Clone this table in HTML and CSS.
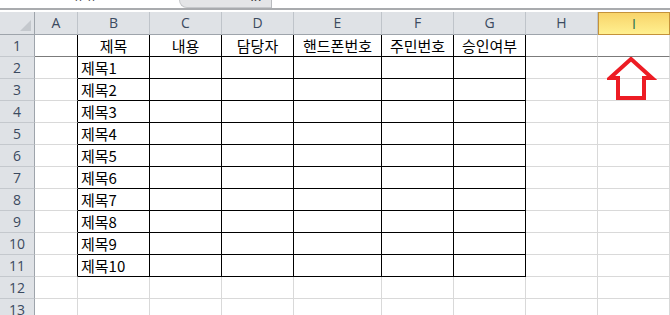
FILE: index.html
```html
<!DOCTYPE html>
<html lang="ko">
<head>
  <meta charset="UTF-8" />
  <meta name="viewport" content="width=device-width, initial-scale=1" />
  <title>승인 명단</title>
  <link rel="stylesheet" href="styles.css">
</head>
<body>
  <!-- formula bar, only its lower edge is in view -->
  <div class="fbar">
    <div class="namebox"><span class="cut">ㅠㅠ</span></div>
    <div class="fxbox"><span class="fx">fx</span></div>
    <div class="finput"></div>
  </div>

  <div class="sheet">
    <div class="corner"></div>
    <div class="hd">A</div><div class="hd">B</div><div class="hd">C</div><div class="hd">D</div><div class="hd">E</div>
    <div class="hd">F</div><div class="hd">G</div><div class="hd">H</div><div class="hd sel">I</div>

    <div class="rn">1</div><div class="c e fr"></div>
    <div class="c t mid">제목</div><div class="c t mid">내용</div><div class="c t mid">담당자</div><div class="c t mid">핸드폰번호</div><div class="c t mid">주민번호</div><div class="c t mid">승인여부</div>
    <div class="c fr"></div><div class="c fr"></div>

    <div class="rn">2</div><div class="c e"></div><div class="c t">제목1</div><div class="c t"></div><div class="c t"></div><div class="c t"></div><div class="c t"></div><div class="c t"></div><div class="c"></div><div class="c"></div>
    <div class="rn">3</div><div class="c e"></div><div class="c t">제목2</div><div class="c t"></div><div class="c t"></div><div class="c t"></div><div class="c t"></div><div class="c t"></div><div class="c"></div><div class="c"></div>
    <div class="rn">4</div><div class="c e"></div><div class="c t">제목3</div><div class="c t"></div><div class="c t"></div><div class="c t"></div><div class="c t"></div><div class="c t"></div><div class="c"></div><div class="c"></div>
    <div class="rn">5</div><div class="c e"></div><div class="c t">제목4</div><div class="c t"></div><div class="c t"></div><div class="c t"></div><div class="c t"></div><div class="c t"></div><div class="c"></div><div class="c"></div>
    <div class="rn">6</div><div class="c e"></div><div class="c t">제목5</div><div class="c t"></div><div class="c t"></div><div class="c t"></div><div class="c t"></div><div class="c t"></div><div class="c"></div><div class="c"></div>
    <div class="rn">7</div><div class="c e"></div><div class="c t">제목6</div><div class="c t"></div><div class="c t"></div><div class="c t"></div><div class="c t"></div><div class="c t"></div><div class="c"></div><div class="c"></div>
    <div class="rn">8</div><div class="c e"></div><div class="c t">제목7</div><div class="c t"></div><div class="c t"></div><div class="c t"></div><div class="c t"></div><div class="c t"></div><div class="c"></div><div class="c"></div>
    <div class="rn">9</div><div class="c e"></div><div class="c t">제목8</div><div class="c t"></div><div class="c t"></div><div class="c t"></div><div class="c t"></div><div class="c t"></div><div class="c"></div><div class="c"></div>
    <div class="rn">10</div><div class="c e"></div><div class="c t">제목9</div><div class="c t"></div><div class="c t"></div><div class="c t"></div><div class="c t"></div><div class="c t"></div><div class="c"></div><div class="c"></div>
    <div class="rn">11</div><div class="c e"></div><div class="c t">제목10</div><div class="c t"></div><div class="c t"></div><div class="c t"></div><div class="c t"></div><div class="c t"></div><div class="c"></div><div class="c"></div>
    <div class="rn">12</div><div class="c"></div><div class="c"></div><div class="c"></div><div class="c"></div><div class="c"></div><div class="c"></div><div class="c"></div><div class="c"></div><div class="c"></div>
    <div class="rn">13</div><div class="c"></div><div class="c"></div><div class="c"></div><div class="c"></div><div class="c"></div><div class="c"></div><div class="c"></div><div class="c"></div><div class="c"></div>

    <!-- red arrow drawn over column I -->
    <svg class="arrow" width="50" height="46" viewBox="0 0 50 46">
      <polygon points="24,2 45,21 37,21 37,41 11,41 11,21 3,21" fill="none" stroke="#ed1c24" stroke-width="4" stroke-linejoin="miter" />
    </svg>
  </div>
</body>
</html>
```

FILE: styles.css
```css
body { margin: 0; width: 670px; height: 315px; overflow: hidden; background: #fff; font-family: "Noto Sans CJK KR", "Noto Sans", sans-serif; }

.fbar { display: flex; height: 8px; border-bottom: 2px solid #a9abae; margin-bottom: 2px; overflow: hidden; }
.namebox { width: 179px; position: relative; }
.cut { position: absolute; left: 72px; top: -12px; font-size: 14px; line-height: 15px; color: #222; }
.fxbox { width: 91px; background: #e4e5e7; border-left: 1px solid #c6c8cb; border-bottom: 1px solid #c6c8cb; border-bottom-left-radius: 10px; position: relative; }
.fx { position: absolute; left: 70px; top: -11px; font-size: 13px; font-style: italic; line-height: 14px; color: #333; }
.finput { flex: 1; border-left: 1px solid #b9bbbe; }

.sheet { position: relative; display: grid; grid-template-columns: 35px 43px 72px 72px 72px 88px 72px 72px 72px 72px; grid-template-rows: 23px repeat(13, 22px); }
.sheet > div { box-sizing: border-box; }

.corner { background: #dfe2e6; border-right: 1px solid #9ea4ab; border-bottom: 1px solid #9ea4ab; position: relative; }
.corner::after { content: ""; position: absolute; right: 3px; bottom: 3px; border-style: solid; border-width: 0 0 11px 11px; border-color: transparent transparent #c4c8cd transparent; }

.hd { background: #dfe2e6; border-right: 1px solid #bfc4ca; border-bottom: 1px solid #9ea4ab; font-family: "Open Sans", sans-serif; font-size: 14px; line-height: 22px; text-align: center; color: #3b4a60; }
.hd.sel { background: linear-gradient(#f8d46a, #fff090); border: 1px solid #c4923a; color: #2b6e50; }

.rn { background: #dfe2e6; border-right: 1px solid #9ea4ab; border-bottom: 1px solid #c4c8cd; font-family: "Open Sans", sans-serif; font-size: 14px; line-height: 21px; text-align: center; color: #3b4a60; }

.c { border-right: 1px solid #d9d9d9; border-bottom: 1px solid #d9d9d9; font-size: 15px; line-height: 21px; padding-left: 3px; white-space: nowrap; color: #000; }
.c.e { border-right-color: #000; }
.c.fr { border-bottom-color: #7b7b7b; }
.c.t { border-right-color: #000; border-bottom-color: #000; }
.c.mid { text-align: center; padding-left: 0; }

.arrow { position: absolute; left: 607px; top: 45px; }
```
